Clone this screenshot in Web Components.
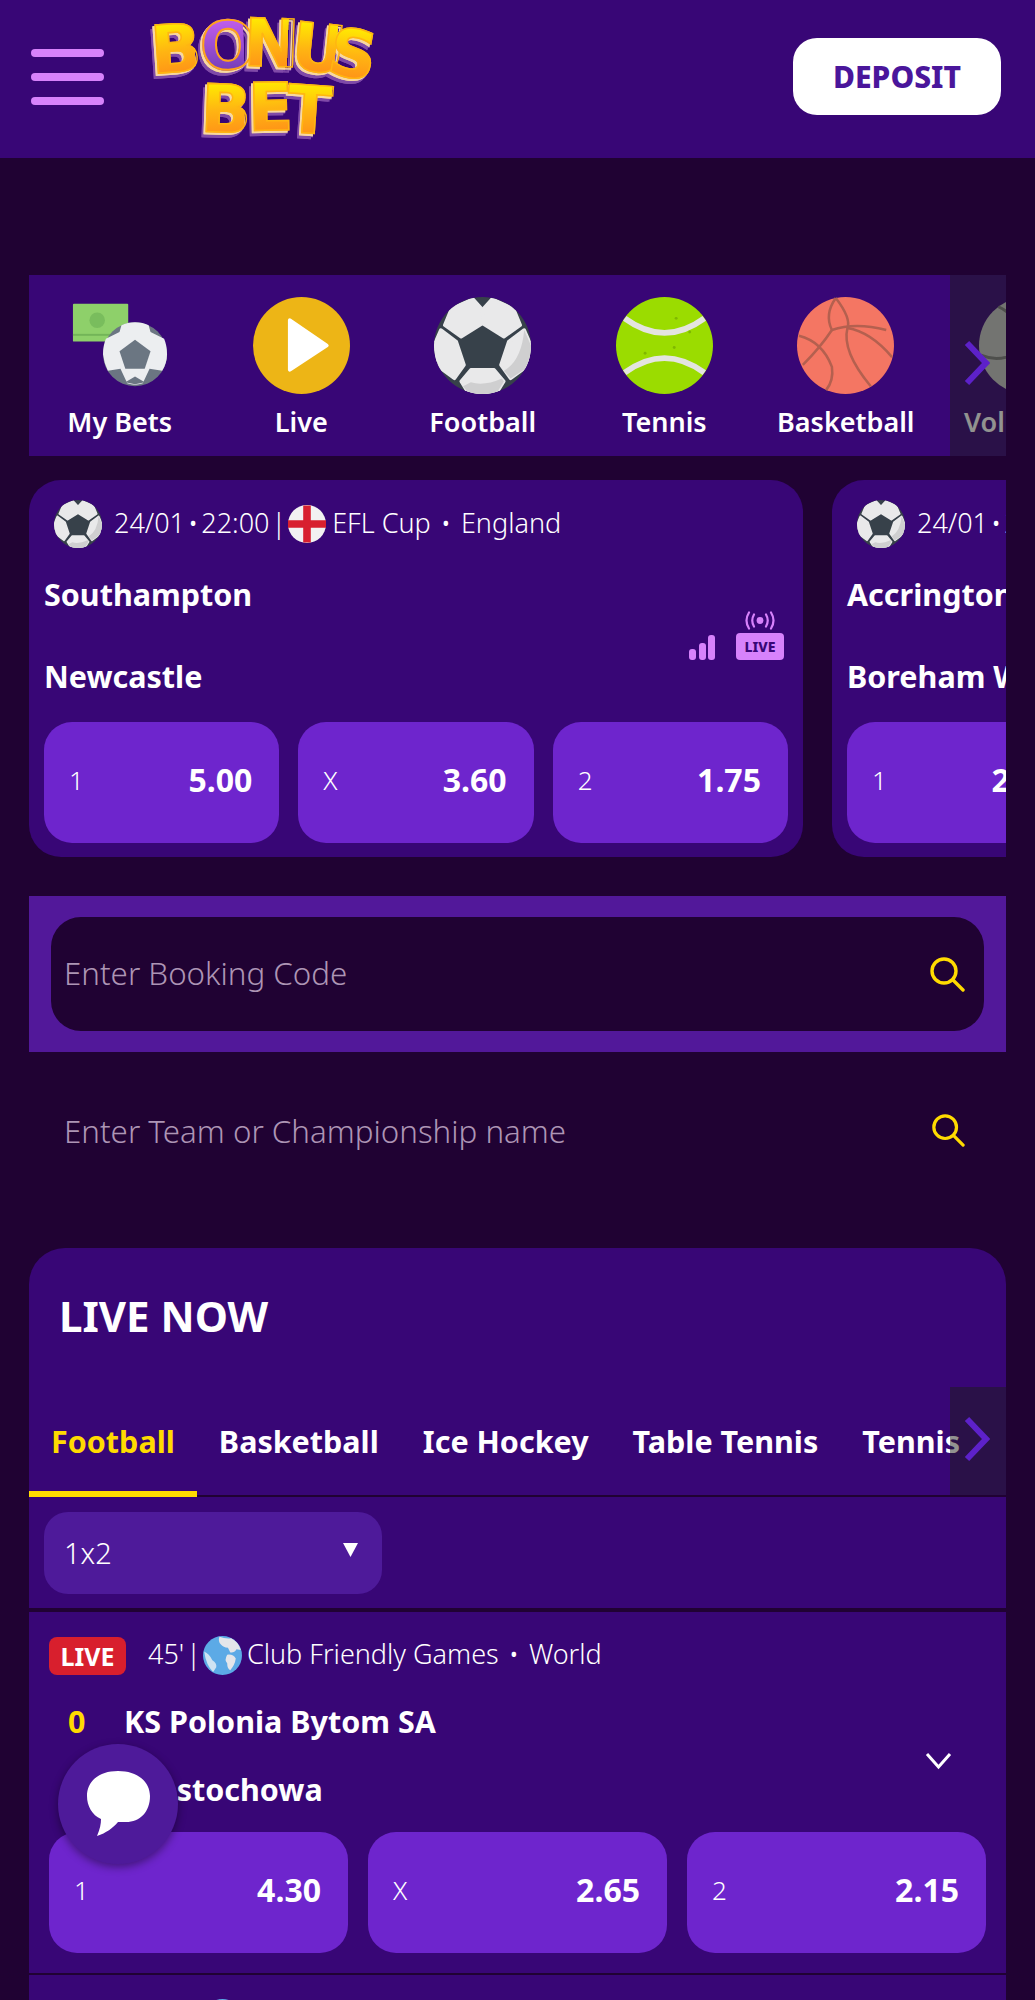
<!DOCTYPE html>
<html lang="en">
<head>
<meta charset="utf-8">
<title>Bonus Bet</title>
<style>
	html, body {
		margin: 0;
		height: 2000px;
		overflow: hidden;
		background: #200233;
		color: #fff;
		font-family: "Noto Sans", "Open Sans", sans-serif;
	}
	main {
		display: flex;
		flex-direction: column;
		padding: 0 29px;
	}
</style>
</head>
<body>
<top-bar></top-bar>
<main>
	<sport-strip>
		<sport-tile icon="bets">My Bets</sport-tile>
		<sport-tile icon="live">Live</sport-tile>
		<sport-tile icon="football">Football</sport-tile>
		<sport-tile icon="tennis">Tennis</sport-tile>
		<sport-tile icon="basketball">Basketball</sport-tile>
		<sport-tile icon="volleyball">Volleyball</sport-tile>
	</sport-strip>
	<card-rail>
		<match-card when="24/01 • 22:00" cup="EFL Cup" country="England" home="Southampton" away="Newcastle" odds="5.00,3.60,1.75"></match-card>
		<match-card when="24/01 • 22:00" cup="EFL Cup" country="England" home="Accrington Stanley" away="Boreham Wood" odds="2.40,3.20,2.80"></match-card>
	</card-rail>
	<booking-box>Enter Booking Code</booking-box>
	<team-search>Enter Team or Championship name</team-search>
	<live-panel>
		<sport-tabs></sport-tabs>
		<market-select>1x2</market-select>
		<live-row minute="45'" cup="Club Friendly Games" country="World" home="KS Polonia Bytom SA" away="Częstochowa" odds="4.30,2.65,2.15"></live-row>
		<live-row minute="45'" cup="Club Friendly Games" country="World"></live-row>
	</live-panel>
</main>
<chat-fab></chat-fab>

<script>
	// Shared drawings, all of them on a 0 0 100 100 canvas
	const footballPanels = `
		<polygon points="40,2 50,13 49,28 28,41 11,29 18,12"/>
		<polygon points="60,2 50,13 51,28 72,41 89,29 82,12"/>
		<polygon points="7,34 23,46 31,70 21,84 2,70 0,50"/>
		<polygon points="93,34 77,46 69,70 79,84 98,70 100,50"/>
		<polygon points="38,75 62,75 72,87 64,100 36,100 28,87"/>`;

	const ICONS = {
		football: `<svg viewBox="0 0 100 100">
			<clipPath id="ball"><circle cx="50" cy="50" r="50"/></clipPath>
			<g clip-path="url(#ball)">
				<rect width="100" height="100" fill="#37414a"/>
				<g fill="#e9e9ea" stroke="#e9e9ea" stroke-width="3.5" stroke-linejoin="round">${footballPanels}</g>
				<path d="M93 34L100 50V70L79 84L72 76Q90 66 93 34ZM38 88Q52 92 70 84L72 87L64 100H36L30 92Z" fill="#cfcfd0"/>
			</g>
		</svg>`,
		bets: `<svg viewBox="0 0 100 100">
			<rect x="2" y="7" width="57" height="39" rx="1" fill="#8ed06a"/>
			<rect x="2" y="38" width="57" height="2" fill="#73b558"/>
			<circle cx="27" cy="24" r="8" fill="#79bd5d"/>
			<circle cx="66" cy="59" r="33" fill="#6b7682"/>
			<path d="M66 26Q58 26 52 29L50 36L36 43Q33 50 33 59Q34 68 38 76L51 74L58 89Q66 92 74 89L81 74L94 76Q99 68 99 59Q99 50 96 43L82 36L80 29Q74 26 66 26Z" fill="#eceef0"/>
			<polygon points="66,44 82,56 76,74 56,74 50,56" fill="#6b7682"/>
			<polygon points="66,90 56,88 66,82 76,88" fill="#6b7682"/>
		</svg>`,
		live: `<svg viewBox="0 0 100 100">
			<circle cx="50" cy="50" r="50" fill="#edb516"/>
			<polygon points="38,24 76,50 38,75" fill="#fff" stroke="#fff" stroke-width="4" stroke-linejoin="round"/>
		</svg>`,
		tennis: `<svg viewBox="0 0 100 100">
			<circle cx="50" cy="50" r="50" fill="#9bdc00"/>
			<path d="M9 22Q50 52 91 22M9 78Q50 48 91 78" fill="none" stroke="#e4e4e0" stroke-width="6"/>
			<circle cx="62" cy="22" r="1.5" fill="#7fb800"/><circle cx="76" cy="36" r="1.5" fill="#7fb800"/><circle cx="60" cy="52" r="1.5" fill="#7fb800"/><circle cx="30" cy="58" r="1.5" fill="#7fb800"/>
		</svg>`,
		basketball: `<svg viewBox="0 0 100 100">
			<circle cx="50" cy="50" r="50" fill="#f47663"/>
			<g fill="none" stroke="#b4604f" stroke-width="2.6">
				<path d="M40 1Q28 18 36 34Q60 26 92 34"/>
				<path d="M40 1Q56 22 52 32Q46 56 76 92"/>
				<path d="M2 40Q26 46 36 72Q38 86 30 96"/>
				<path d="M6 70Q24 52 36 34"/>
				<path d="M52 32Q76 36 98 62"/>
			</g>
		</svg>`,
		volleyball: `<svg viewBox="0 0 100 100">
			<circle cx="50" cy="50" r="50" fill="#c4c4c4"/>
			<g fill="none" stroke="#7d7d7d" stroke-width="3">
				<path d="M50 50Q42 20 20 10M50 50Q80 40 96 24M50 50Q56 80 74 94M2 60Q26 70 50 50"/>
			</g>
		</svg>`,
		england: `<svg viewBox="0 0 100 100">
			<circle cx="50" cy="50" r="50" fill="#f2f2f2"/>
			<path d="M40 1H60V40H100V60H60V99H40V60H0V40H40Z" fill="#d8202f"/>
		</svg>`,
		globe: `<svg viewBox="0 0 100 100">
			<circle cx="50" cy="50" r="50" fill="#5caae6"/>
			<path d="M42 2Q58 8 72 6Q90 14 97 36L86 34Q80 44 70 42L64 30Q52 30 46 22Q38 14 42 2Z" fill="#e4e6ea"/>
			<path d="M62 48Q78 46 84 58Q82 74 70 88Q62 84 62 70Q54 62 62 48Z" fill="#e4e6ea"/>
			<path d="M3 40Q16 46 24 62Q36 70 34 80L26 92Q8 76 3 40Z" fill="#cfe3f2"/>
		</svg>`,
		search: `<svg viewBox="0 0 36 36">
			<circle cx="15" cy="15" r="12" fill="none" stroke="#ffdb00" stroke-width="3.4"/>
			<path d="M24 24L34 34" stroke="#ffdb00" stroke-width="3.4" stroke-linecap="round"/>
		</svg>`,
		chevron: `<svg viewBox="0 0 26 46">
			<path d="M3 3L22 23L3 43" fill="none" stroke="#5d21c9" stroke-width="6"/>
		</svg>`
	};

	class TopBar extends HTMLElement {
		constructor() {
			super();
			this.attachShadow({ mode: 'open' }).innerHTML = `
				<style>
					:host {
						align-items: center;
						background: #380676;
						box-sizing: border-box;
						display: flex;
						height: 158px;
						padding: 0 34px 5px 31px;
					}
					.burger {
						display: flex;
						flex-direction: column;
						gap: 16px;
						margin-right: 46px;
						width: 73px;
					}
					.burger i {
						background: #d782fb;
						border-radius: 4px;
						height: 8px;
					}
					button {
						background: #fff;
						border: 0;
						border-radius: 24px;
						color: #4a169b;
						font: 800 30px "Noto Sans", sans-serif;
						height: 77px;
						margin-left: auto;
						width: 208px;
					}
				</style>
				<div class="burger"><i></i><i></i><i></i></div>
				<bonus-logo></bonus-logo>
				<button>DEPOSIT</button>
			`;
		}
	}

	class BonusLogo extends HTMLElement {
		constructor() {
			super();
			const word = (letters) => letters.map(([c, x, y, r]) =>
				`<b class="${c === 'O' ? 'donut' : ''}" style="transform:translate(${x}px,${y}px) rotate(${r}deg)">${c}</b>`).join('');
			this.attachShadow({ mode: 'open' }).innerHTML = `
				<style>
					:host {
						display: flex;
						flex-direction: column;
						filter: drop-shadow(-2px 2px 0 #f8d8a0) drop-shadow(-2px 3px 0 #7f4aa8);
						height: 118px;
						width: 224px;
					}
					div {
						display: flex;
						height: 60px;
					}
					.bet {
						padding-left: 48px;
					}
					b {
						background: linear-gradient(175deg, #ffee00 5%, #ffb512 50%, #ff8d18 95%);
						-webkit-background-clip: text;
						background-clip: text;
						color: transparent;
						display: block;
						font: 900 66px/60px "DejaVu Sans", sans-serif;
						-webkit-text-stroke: 1.5px #ffb512;
						position: relative;
						width: 44px;
					}
					b.donut {
						background-image: linear-gradient(#c55ff0, #6c3ab2);
						-webkit-text-stroke: 2px #ffa21a;
					}
				</style>
				<div>${word([['B', 1, 2, -4], ['O', 6, -1, -2], ['N', 6, -4, 2], ['U', 10, 1, 6], ['S', 3, 7, 10]])}</div>
				<div class="bet">${word([['B', 3, 2, 2], ['E', 6, 0, -1], ['T', 1, 3, 4]])}</div>
			`;
		}
	}

	class SportStrip extends HTMLElement {
		constructor() {
			super();
			this.attachShadow({ mode: 'open' }).innerHTML = `
				<style>
					:host {
						background: #380676;
						display: flex;
						height: 181px;
						margin-top: 117px;
						overflow: hidden;
						position: relative;
					}
					.more {
						align-items: center;
						background: rgba(28, 30, 24, .48);
						bottom: 0;
						display: flex;
						padding: 0 0 6px 14px;
						position: absolute;
						right: 0;
						top: 0;
						width: 42px;
					}
					.more svg { height: 46px; width: 26px; }
				</style>
				<slot></slot>
				<div class="more">${ICONS.chevron}</div>
			`;
		}
	}

	class SportTile extends HTMLElement {
		constructor() {
			super();
			this.attachShadow({ mode: 'open' }).innerHTML = `
				<style>
					:host {
						align-items: center;
						display: flex;
						flex: 0 0 181.5px;
						flex-direction: column;
						font-size: 27px;
						font-weight: 600;
						line-height: 30px;
						padding-top: 22px;
						white-space: nowrap;
					}
					.icon { height: 97px; margin-bottom: 13px; width: 97px; }
				</style>
				<div class="icon"></div>
				<slot></slot>
			`;
		}
		connectedCallback() {
			this.shadowRoot.querySelector('.icon').innerHTML = ICONS[this.getAttribute('icon')];
		}
	}

	class CardRail extends HTMLElement {
		constructor() {
			super();
			this.attachShadow({ mode: 'open' }).innerHTML = `
				<style>
					:host {
						display: flex;
						gap: 29px;
						margin-top: 24px;
						overflow: hidden;
					}
				</style>
				<slot></slot>
			`;
		}
	}

	class OddButton extends HTMLElement {
		constructor() {
			super();
			this.attachShadow({ mode: 'open' }).innerHTML = `
				<style>
					:host {
						align-items: center;
						background: #6e25cd;
						border-radius: 28px;
						box-sizing: border-box;
						display: flex;
						flex: 1 1 0;
						height: 121px;
						justify-content: space-between;
						min-width: 0;
						padding: 0 27px 6px 25px;
					}
					span { font-size: 26px; font-weight: 300; }
					b { font-size: 32px; font-weight: 700; }
				</style>
				<span></span><b></b>
			`;
		}
		connectedCallback() {
			this.shadowRoot.querySelector('span').textContent = this.getAttribute('label');
			this.shadowRoot.querySelector('b').textContent = this.getAttribute('value');
		}
	}

	// Turns "5.00,3.60,1.75" into the three buttons of a 1 X 2 market
	const oddButtons = (odds) => odds.split(',').map((value, i) =>
		`<odd-button label="${['1', 'X', '2'][i]}" value="${value}"></odd-button>`).join('');

	class MatchCard extends HTMLElement {
		constructor() {
			super();
			this.attachShadow({ mode: 'open' }).innerHTML = `
				<style>
					:host {
						background: #380676;
						border-radius: 32px;
						box-sizing: border-box;
						display: block;
						flex: 0 0 774px;
						height: 377px;
						padding: 20px 15px 14px;
					}
					.meta {
						align-items: center;
						display: flex;
						font-size: 27px;
						font-weight: 300;
						height: 48px;
						padding-left: 10px;
						white-space: nowrap;
					}
					.meta span { padding-bottom: 4px; }
					.sport { height: 48px; margin-right: 12px; width: 48px; }
					.when { word-spacing: -4px; }
					.bar { margin-left: 2px; }
					.flag { height: 39px; margin: 0 6px 0 2px; width: 38px; }
					.dot { margin: 0 10px; }
					.teams {
						align-items: center;
						display: flex;
						justify-content: space-between;
						margin: 22px 0 22px;
					}
					.names {
						display: flex;
						flex-direction: column;
						font-size: 30.5px;
						font-weight: 700;
						gap: 34px;
						line-height: 48px;
						white-space: nowrap;
					}
					.signal { align-items: flex-end; display: flex; gap: 21px; padding-right: 4px; }
					.signal svg { display: block; }
					.odds { display: flex; gap: 19px; }
				</style>
				<div class="meta">
					<div class="sport">${ICONS.football}</div>
					<span class="when"></span><span class="bar">|</span>
					<div class="flag">${ICONS.england}</div>
					<span class="cup"></span><span class="dot">•</span><span class="country"></span>
				</div>
				<div class="teams">
					<div class="names"><span class="home"></span><span class="away"></span></div>
					<div class="signal">
						<svg width="26" height="25" viewBox="0 0 26 25" fill="#d782fb">
							<rect y="14" width="7" height="11" rx="3"/><rect x="10" y="8" width="7" height="17" rx="3"/><rect x="19" width="7" height="25" rx="3"/>
						</svg>
						<live-tag></live-tag>
					</div>
				</div>
				<div class="odds"></div>
			`;
		}
		connectedCallback() {
			const root = this.shadowRoot;
			for (const name of ['when', 'cup', 'country', 'home', 'away']) {
				root.querySelector('.' + name).textContent = this.getAttribute(name);
			}
			root.querySelector('.odds').innerHTML = oddButtons(this.getAttribute('odds'));
		}
	}

	class LiveTag extends HTMLElement {
		constructor() {
			super();
			this.attachShadow({ mode: 'open' }).innerHTML = `
				<style>
					:host {
						align-items: center;
						display: flex;
						flex-direction: column;
						gap: 2px;
						width: 48px;
					}
					svg { display: block; }
					span {
						background: #d782fb;
						border-radius: 4px;
						color: #380676;
						font-size: 14px;
						font-weight: 800;
						height: 27px;
						line-height: 27px;
						text-align: center;
						width: 48px;
					}
				</style>
				<svg width="32" height="20" viewBox="0 0 32 19" fill="none" stroke="#d782fb" stroke-width="2.2" stroke-linecap="round">
					<circle cx="16" cy="9" r="3.4" fill="#d782fb" stroke="none"/>
					<path d="M10 3Q6.5 9 10 15M22 3Q25.5 9 22 15M5 1Q0 9 5 17M27 1Q32 9 27 17"/>
				</svg>
				<span>LIVE</span>
			`;
		}
	}

	class BookingBox extends HTMLElement {
		constructor() {
			super();
			this.attachShadow({ mode: 'open' }).innerHTML = `
				<style>
					:host {
						background: #52189a;
						display: block;
						margin-top: 39px;
						padding: 21px 22px;
					}
					div {
						align-items: center;
						background: #200233;
						border-radius: 30px;
						color: #ad95b5;
						display: flex;
						font-size: 31.3px;
						font-weight: 300;
						height: 114px;
						justify-content: space-between;
						padding: 0 19px 0 13px;
					}
					span { padding-bottom: 3px; }
					svg { height: 36px; width: 36px; }
				</style>
				<div><span><slot></slot></span>${ICONS.search}</div>
			`;
		}
	}

	class TeamSearch extends HTMLElement {
		constructor() {
			super();
			this.attachShadow({ mode: 'open' }).innerHTML = `
				<style>
					:host {
						align-items: center;
						box-sizing: border-box;
						color: #ad95b5;
						display: flex;
						font-size: 31.3px;
						font-weight: 300;
						height: 196px;
						justify-content: space-between;
						padding: 0 41px 36px 35px;
					}
					span { padding-bottom: 3px; }
					svg { height: 34px; margin-bottom: 4px; width: 34px; }
				</style>
				<span><slot></slot></span>${ICONS.search}
			`;
		}
	}

	class LivePanel extends HTMLElement {
		constructor() {
			super();
			this.attachShadow({ mode: 'open' }).innerHTML = `
				<style>
					:host {
						background: #380676;
						border-radius: 36px 36px 0 0;
						display: block;
						overflow: hidden;
					}
					h2 {
						font-size: 42px;
						font-weight: 700;
						height: 139px;
						line-height: 135px;
						margin: 0;
						padding-left: 30px;
					}
				</style>
				<h2>LIVE NOW</h2>
				<slot></slot>
			`;
		}
	}

	class SportTabs extends HTMLElement {
		constructor() {
			super();
			const tabs = ['Football', 'Basketball', 'Ice Hockey', 'Table Tennis', 'Tennis'];
			this.attachShadow({ mode: 'open' }).innerHTML = `
				<style>
					:host {
						box-shadow: inset 0 -2px #200233;
						display: flex;
						height: 110px;
						overflow: hidden;
						position: relative;
					}
					span {
						align-items: center;
						box-sizing: border-box;
						display: flex;
						flex: none;
						font-size: 30.5px;
						font-weight: 700;
						padding: 0 22px 2px;
						white-space: nowrap;
					}
					.on {
						border-bottom: 6px solid #ffdb00;
						color: #ffdb00;
						padding-bottom: 0;
						padding-top: 4px;
					}
					.more {
						align-items: center;
						background: rgba(28, 30, 24, .48);
						bottom: 2px;
						display: flex;
						padding: 0 0 4px 14px;
						position: absolute;
						right: 0;
						top: 0;
						width: 42px;
					}
					.more svg { height: 46px; width: 26px; }
				</style>
				${tabs.map((t, i) => `<span class="${i ? '' : 'on'}">${t}</span>`).join('')}
				<div class="more">${ICONS.chevron}</div>
			`;
		}
	}

	class MarketSelect extends HTMLElement {
		constructor() {
			super();
			this.attachShadow({ mode: 'open' }).innerHTML = `
				<style>
					:host {
						border-bottom: 4px solid #200233;
						display: block;
						padding: 15px 15px 14px;
					}
					div {
						align-items: center;
						background: #4e1a9a;
						border-radius: 24px;
						box-sizing: border-box;
						display: flex;
						font-size: 29px;
						font-weight: 300;
						height: 82px;
						justify-content: space-between;
						padding: 0 24px 2px 20px;
						width: 338px;
					}
					svg { margin-bottom: 4px; }
				</style>
				<div><slot></slot>
					<svg width="15" height="14" viewBox="0 0 15 14"><polygon points="0,0 15,0 7.5,14" fill="#fff"/></svg>
				</div>
			`;
		}
	}

	class LiveRow extends HTMLElement {
		constructor() {
			super();
			this.attachShadow({ mode: 'open' }).innerHTML = `
				<style>
					:host {
						border-bottom: 2px solid #200233;
						display: block;
						padding: 24px 20px 20px;
					}
					.meta {
						align-items: center;
						display: flex;
						font-size: 27px;
						font-weight: 300;
						height: 40px;
						white-space: nowrap;
					}
					.meta span { padding-bottom: 6px; }
					.meta .badge {
						background: #d81f2d;
						border-radius: 8px;
						font-size: 25px;
						font-weight: 700;
						height: 38px;
						line-height: 38px;
						margin-right: 22px;
						padding: 0;
						text-align: center;
						width: 77px;
					}
					.bar { margin-left: 2px; }
					.globe { height: 40px; margin: 0 5px 0 2px; width: 39px; }
					.dot { margin: 0 10px; }
					.teams {
						align-items: center;
						display: flex;
						justify-content: space-between;
						margin: 21px 0 19px;
						padding: 0 34px 0 19px;
					}
					.names {
						display: grid;
						font-size: 30.5px;
						font-weight: 700;
						grid-template-columns: 56px auto;
						line-height: 48px;
						row-gap: 20px;
						white-space: nowrap;
					}
					.names i { color: #ffdb00; font-style: normal; }
					.teams svg { margin-top: 12px; }
					.odds { display: flex; gap: 20px; }
				</style>
				<div class="meta">
					<span class="badge">LIVE</span>
					<span class="minute"></span><span class="bar">|</span>
					<div class="globe">${ICONS.globe}</div>
					<span class="cup"></span><span class="dot">•</span><span class="country"></span>
				</div>
				<div class="teams">
					<div class="names">
						<i>0</i><span class="home"></span>
						<i>0</i><span class="away"></span>
					</div>
					<svg width="27" height="18" viewBox="0 0 27 18"><path d="M2 2L13.5 15L25 2" fill="none" stroke="#fff" stroke-width="3"/></svg>
				</div>
				<div class="odds"></div>
			`;
		}
		connectedCallback() {
			const root = this.shadowRoot;
			for (const name of ['minute', 'cup', 'country', 'home', 'away']) {
				root.querySelector('.' + name).textContent = this.getAttribute(name) || '';
			}
			if (this.hasAttribute('odds')) {
				root.querySelector('.odds').innerHTML = oddButtons(this.getAttribute('odds'));
			}
		}
	}

	class ChatFab extends HTMLElement {
		constructor() {
			super();
			this.attachShadow({ mode: 'open' }).innerHTML = `
				<style>
					:host {
						align-items: center;
						background: #4e1a9a;
						border-radius: 50%;
						bottom: 136px;
						box-shadow: 0 3px 8px rgba(0, 0, 0, .4);
						display: flex;
						height: 120px;
						justify-content: center;
						left: 58px;
						position: fixed;
						width: 120px;
					}
				</style>
				<svg width="120" height="120" viewBox="0 0 120 120">
					<path d="M60 27C80 27 92 38 92 52C92 68 82 78 68 78H60C55 84 48 89 39 92C42 85 43 80 43 75C34 71 29 62 29 52C29 38 40 27 60 27Z" fill="#fff"/>
				</svg>
			`;
		}
	}

	customElements.define('top-bar', TopBar);
	customElements.define('bonus-logo', BonusLogo);
	customElements.define('sport-strip', SportStrip);
	customElements.define('sport-tile', SportTile);
	customElements.define('card-rail', CardRail);
	customElements.define('odd-button', OddButton);
	customElements.define('match-card', MatchCard);
	customElements.define('live-tag', LiveTag);
	customElements.define('booking-box', BookingBox);
	customElements.define('team-search', TeamSearch);
	customElements.define('live-panel', LivePanel);
	customElements.define('sport-tabs', SportTabs);
	customElements.define('market-select', MarketSelect);
	customElements.define('live-row', LiveRow);
	customElements.define('chat-fab', ChatFab);
</script>
</body>
</html>
